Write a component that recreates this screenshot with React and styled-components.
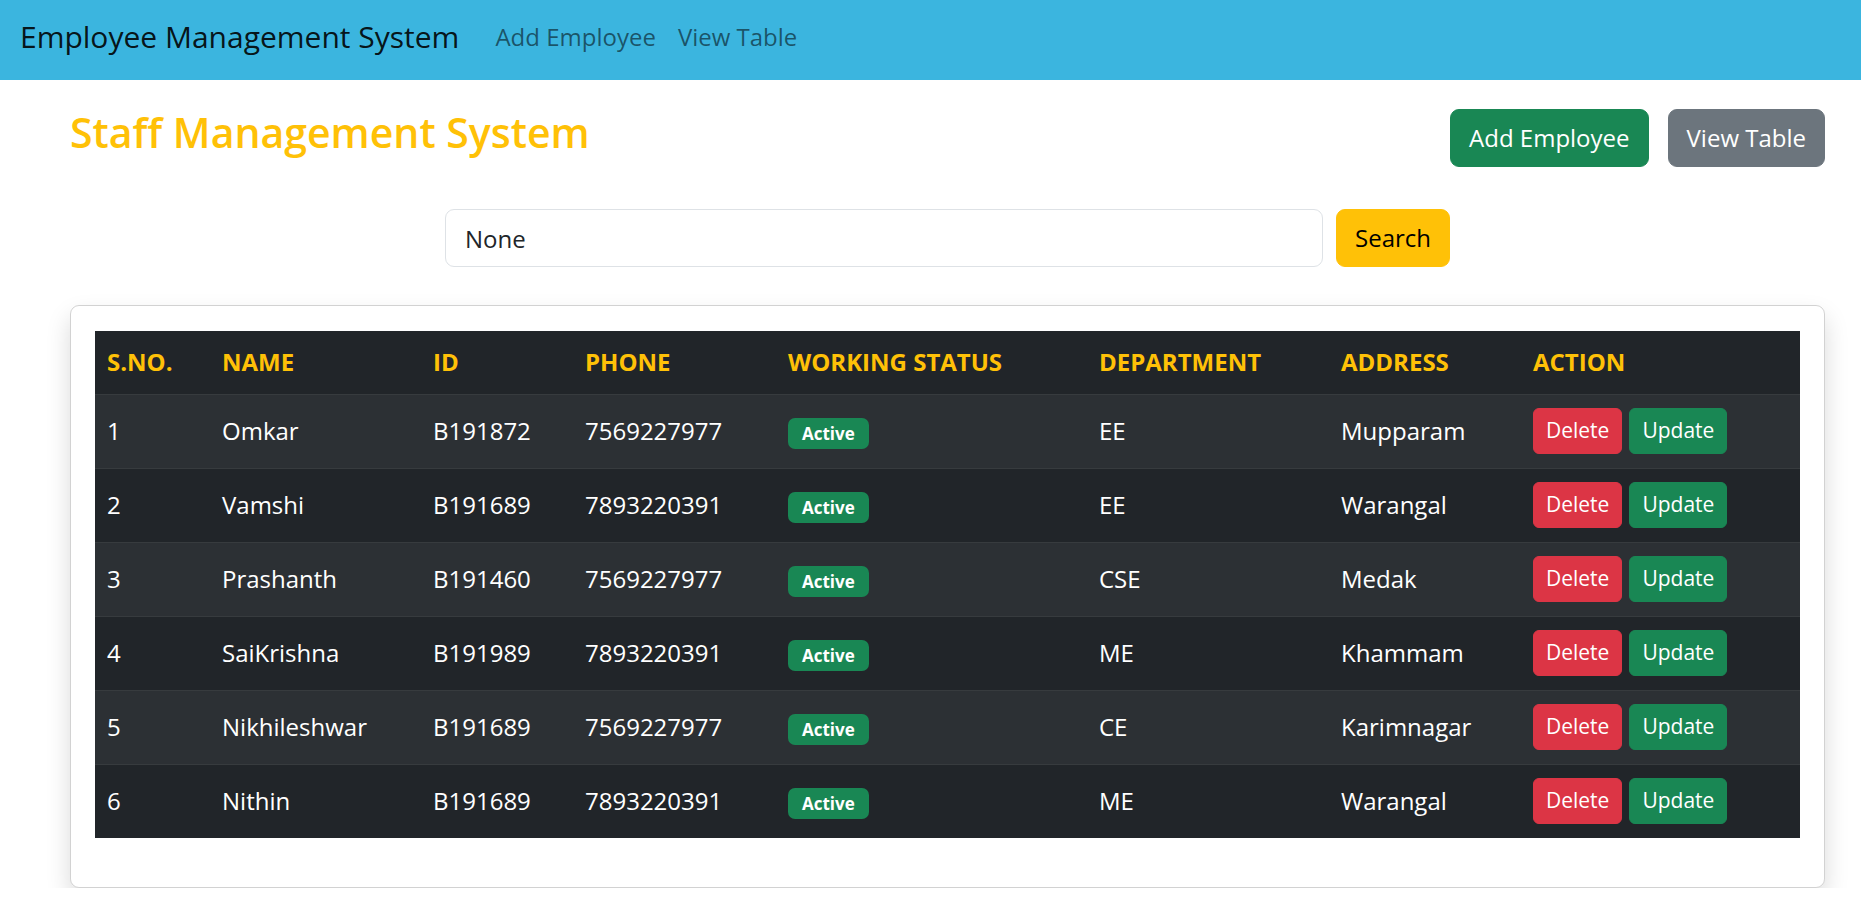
import React, { useState } from 'react';
import styled, { createGlobalStyle } from 'styled-components';

const GlobalStyle = createGlobalStyle`
  body {
    margin: 0;
    font-family: 'Open Sans', 'Noto Sans', sans-serif;
    font-size: 24px;
    color: #212529;
    background-color: #fff;
  }
  * { box-sizing: border-box; }
`;

const Navbar = styled.nav`
  height: 80px;
  background-color: #3bb5df;
  display: flex;
  align-items: center;
  padding: 0 20px 7px;
`;

const Brand = styled.a`
  font-size: 30px;
  color: rgba(0, 0, 0, 0.9);
  text-decoration: none;
  margin-right: 25px;
`;

const NavLink = styled.a`
  font-size: 24px;
  color: rgba(0, 0, 0, 0.55);
  text-decoration: none;
  padding: 0 11px;
`;

const Container = styled.main`
  padding: 0 36px 0 70px;
`;

const HeaderRow = styled.div`
  display: flex;
  justify-content: space-between;
  align-items: flex-start;
  padding-top: 24px;
`;

const Title = styled.h2`
  margin: 4px 0 0;
  font-size: 41px;
  font-weight: 600;
  line-height: 1.2;
  color: #ffc107;
`;

const ButtonGroup = styled.div`
  display: flex;
  gap: 19px;
  margin-top: 5px;
`;

const colors = {
  success: '#198754',
  secondary: '#6c757d',
  danger: '#dc3545',
  warning: '#ffc107',
};

const Button = styled.button`
  font-family: inherit;
  font-size: ${p => (p.$small ? '21px' : '24px')};
  line-height: 1.5;
  height: ${p => (p.$small ? '46px' : '58px')};
  padding: ${p => (p.$small ? '0 12px' : '0 18px')};
  border: 1px solid ${p => colors[p.$variant]};
  border-radius: ${p => (p.$small ? '6px' : '9px')};
  background-color: ${p => colors[p.$variant]};
  color: ${p => (p.$variant === 'warning' ? '#000' : '#fff')};
  cursor: pointer;
`;

const SearchForm = styled.form`
  display: flex;
  justify-content: center;
  gap: 13px;
  margin-top: 42px;
`;

const SearchInput = styled.input`
  width: 878px;
  height: 58px;
  font-family: inherit;
  font-size: 24px;
  color: #212529;
  padding: 0 19px;
  border: 1px solid #dee2e6;
  border-radius: 9px;
  outline: none;
`;

const Card = styled.div`
  margin-top: 38px;
  border: 1px solid rgba(0, 0, 0, 0.175);
  border-radius: 9px;
  box-shadow: 0 12px 24px rgba(0, 0, 0, 0.15);
  padding: 25px 24px 49px;
`;

const Table = styled.table`
  width: 100%;
  border-collapse: collapse;
  table-layout: fixed;
  background-color: #212529;
  color: #fff;
`;

const Th = styled.th`
  text-align: left;
  font-weight: 700;
  color: #ffc107;
  padding: 13px 12px 14px;
  line-height: 1.5;
  border-bottom: 1px solid #373b3e;
`;

const Row = styled.tr`
  background-color: ${p => (p.$striped ? '#2c3034' : '#212529')};
  border-bottom: 1px solid #373b3e;
  &:last-child { border-bottom: none; }
`;

const Td = styled.td`
  padding: 13px 12px 14px;
  line-height: 1.5;
  vertical-align: middle;
`;

const Badge = styled.span`
  display: inline-block;
  font-size: 17px;
  font-weight: 700;
  line-height: 1;
  padding: 7px 14px;
  border-radius: 7px;
  background-color: #198754;
  color: #fff;
`;

const Actions = styled.div`
  display: flex;
  gap: 7px;
`;

const columns = [
  { label: 'S.NO.', width: 115 },
  { label: 'NAME', width: 211 },
  { label: 'ID', width: 152 },
  { label: 'PHONE', width: 203 },
  { label: 'WORKING STATUS', width: 311 },
  { label: 'DEPARTMENT', width: 242 },
  { label: 'ADDRESS', width: 192 },
  { label: 'ACTION', width: 279 },
];

const initialEmployees = [
  { name: 'Omkar', id: 'B191872', phone: '7569227977', dept: 'EE', address: 'Mupparam' },
  { name: 'Vamshi', id: 'B191689', phone: '7893220391', dept: 'EE', address: 'Warangal' },
  { name: 'Prashanth', id: 'B191460', phone: '7569227977', dept: 'CSE', address: 'Medak' },
  { name: 'SaiKrishna', id: 'B191989', phone: '7893220391', dept: 'ME', address: 'Khammam' },
  { name: 'Nikhileshwar', id: 'B191689', phone: '7569227977', dept: 'CE', address: 'Karimnagar' },
  { name: 'Nithin', id: 'B191689', phone: '7893220391', dept: 'ME', address: 'Warangal' },
];

const App = () => {
  const [query, setQuery] = useState('None');

  return (
    <>
      <GlobalStyle />
      <Navbar>
        <Brand href="#">Employee Management System</Brand>
        <NavLink href="#">Add Employee</NavLink>
        <NavLink href="#">View Table</NavLink>
      </Navbar>
      <Container>
        <HeaderRow>
          <Title>Staff Management System</Title>
          <ButtonGroup>
            <Button $variant="success">Add Employee</Button>
            <Button $variant="secondary">View Table</Button>
          </ButtonGroup>
        </HeaderRow>
        <SearchForm onSubmit={e => e.preventDefault()}>
          <SearchInput value={query} onChange={e => setQuery(e.target.value)} />
          <Button $variant="warning" type="submit">Search</Button>
        </SearchForm>
        <Card>
          <Table>
            <colgroup>
              {columns.map(col => (
                <col key={col.label} style={{ width: col.width }} />
              ))}
            </colgroup>
            <thead>
              <tr>
                {columns.map(col => (
                  <Th key={col.label}>{col.label}</Th>
                ))}
              </tr>
            </thead>
            <tbody>
              {initialEmployees.map((emp, i) => (
                <Row key={i} $striped={i % 2 === 0}>
                  <Td>{i + 1}</Td>
                  <Td>{emp.name}</Td>
                  <Td>{emp.id}</Td>
                  <Td>{emp.phone}</Td>
                  <Td><Badge>Active</Badge></Td>
                  <Td>{emp.dept}</Td>
                  <Td>{emp.address}</Td>
                  <Td>
                    <Actions>
                      <Button $small $variant="danger">Delete</Button>
                      <Button $small $variant="success">Update</Button>
                    </Actions>
                  </Td>
                </Row>
              ))}
            </tbody>
          </Table>
        </Card>
      </Container>
    </>
  );
};

export default App;
